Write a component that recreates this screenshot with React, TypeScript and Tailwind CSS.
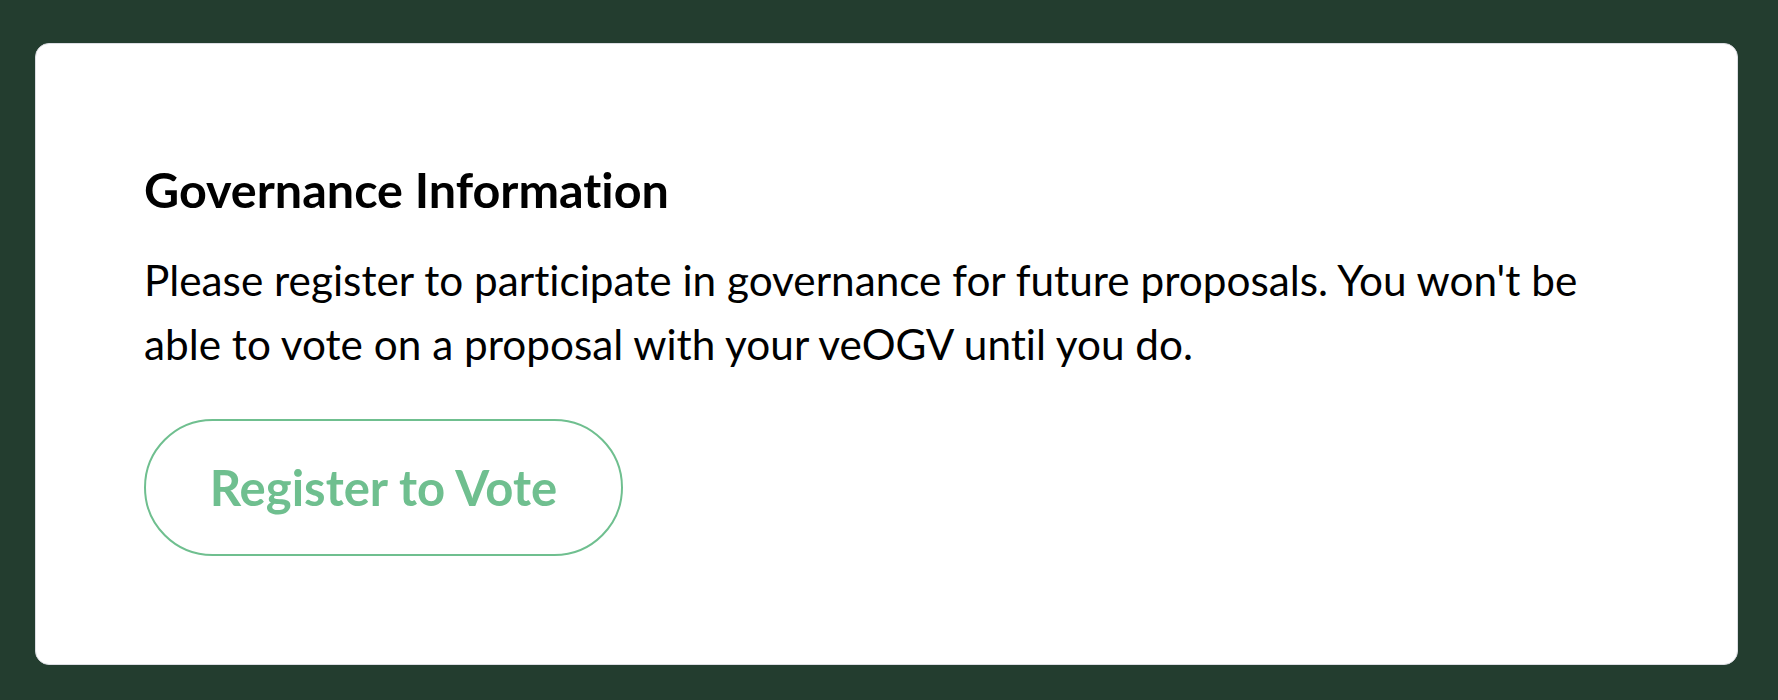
import React from "react";

export default function App() {
  return (
    <div
      className="min-h-[700px] w-full bg-[#233d2f] pt-[43px] pl-[35px] pr-[40px] pb-[35px] [font-variant-ligatures:none]"
      style={{ fontFamily: "Lato, 'Noto Sans', sans-serif" }}
    >
      <div className="rounded-[14px] border border-[#dcdde3] bg-white pl-[108px] pr-[108px] pt-[116px] pb-[108px]">
        <h2 className="text-[48.5px] font-bold leading-[58px] text-black">
          Governance Information
        </h2>
        <p className="mt-[30px] max-w-[1460px] text-[42.3px] leading-[64px] text-black">
          Please register to participate in governance for future proposals. You won't be able to vote on a proposal with your veOGV until you do.
        </p>
        <button className="mt-[43px] flex h-[137px] w-[479px] items-center justify-center rounded-full border-2 border-[#6fbf8f] bg-white text-[49px] font-bold text-[#6fbf8f]">
          Register to Vote
        </button>
      </div>
    </div>
  );
}
